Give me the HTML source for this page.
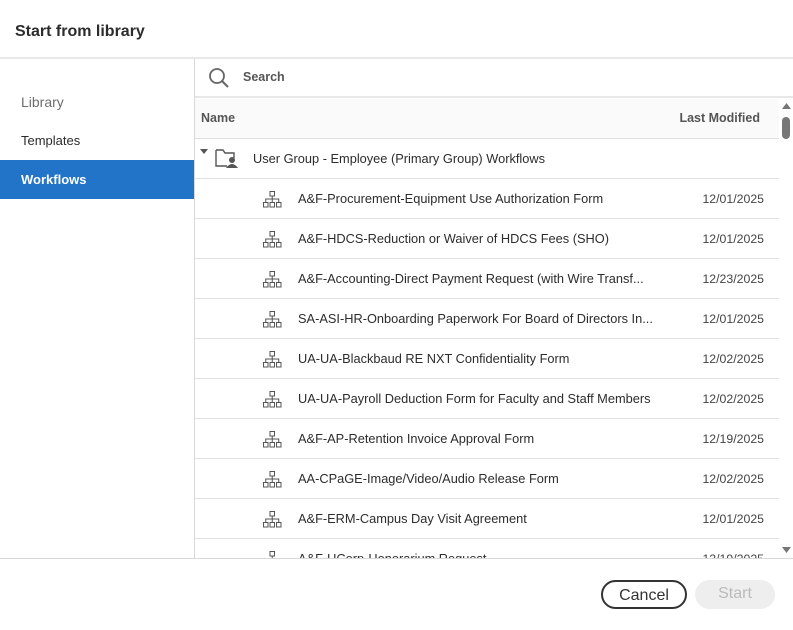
<!DOCTYPE html>
<html><head><style>
*{margin:0;padding:0;box-sizing:border-box}
body{width:793px;height:630px;background:#fff;font-family:"Liberation Sans",sans-serif;color:#2c2c2c;position:relative;overflow:hidden}
.title{position:absolute;left:15px;top:23px;font-size:16px;font-weight:bold;color:#2c2c2c}
.hdiv{position:absolute;left:0;top:57px;width:793px;height:2px;background:#e8e8e8}
.side{position:absolute;left:0;top:59px;width:195px;height:499px;border-right:1px solid #d8d8d8}
.side .it{position:absolute;left:21px;font-size:13px}
.side .sel{position:absolute;left:0;top:101px;width:194px;height:39px;background:#2274c8}
.search{position:absolute;left:195px;top:59px;width:598px;height:39px;border-bottom:2px solid #e8e8e8}
.search span{position:absolute;left:48px;top:11px;font-size:12.5px;font-weight:bold;color:#555}
.head{position:absolute;left:195px;top:99px;width:584px;height:40px;background:#fafafa;border-bottom:1px solid #e0e0e0;font-size:12.5px;font-weight:bold;color:#555}
.row{position:absolute;left:195px;width:584px;height:40px;border-bottom:1px solid #e3e3e3;font-size:12.8px;color:#2c2c2c}
.row .t{position:absolute;left:103px;top:12px;white-space:nowrap}
.row .d{position:absolute;right:15px;top:13px;color:#444;font-size:12.3px}
.row svg{position:absolute;left:67px;top:11px}
.foot{position:absolute;left:0;top:558px;width:793px;height:1px;background:#d8d8d8}
.btn{position:absolute;top:580px;height:29px;border-radius:15px;font-size:16px;text-align:center;line-height:27px}
.sb{position:absolute;left:779px;top:99px;width:14px;height:459px;background:#fff}
</style></head><body>
<div class="title">Start from library</div>
<div class="hdiv"></div>
<div class="side">
<div class="it" style="top:35px;color:#6e6e6e;font-size:14px">Library</div>
<div class="it" style="top:74px">Templates</div>
<div class="sel"></div>
<div class="it" style="top:113px;color:#fff;font-weight:bold">Workflows</div>
</div>
<div class="search">
<svg style="position:absolute;left:13px;top:8px" width="22" height="22" viewBox="0 0 22 22"><circle cx="9" cy="9" r="7" fill="none" stroke="#666" stroke-width="1.8"/><line x1="14" y1="14" x2="20" y2="20" stroke="#666" stroke-width="2"/></svg>
<span>Search</span></div>
<div class="head"><span style="position:absolute;left:6px;top:12px">Name</span><span style="position:absolute;right:19px;top:12px">Last Modified</span></div>
<div class="row" style="top:139px">
<svg style="left:5px;top:10px" width="8" height="6" viewBox="0 0 8 6"><path d="M0 0H8L4 5Z" fill="#555"/></svg>
<svg style="left:20px;top:8px" width="26" height="22" viewBox="0 0 26 22"><path d="M1 3H8L10 6H19V11M1 3V19H12" fill="none" stroke="#555" stroke-width="1.4"/><circle cx="17" cy="13" r="3" fill="#555"/><path d="M11 21Q17 13 23 21Z" fill="#555"/></svg>
<span class="t" style="left:58px">User Group - Employee (Primary Group) Workflows</span></div>
<div id="rows"></div>
<script>
var d=[["A&F-Procurement-Equipment Use Authorization Form","12/01/2025"],["A&F-HDCS-Reduction or Waiver of HDCS Fees (SHO)","12/01/2025"],["A&F-Accounting-Direct Payment Request (with Wire Transf...","12/23/2025"],["SA-ASI-HR-Onboarding Paperwork For Board of Directors In...","12/01/2025"],["UA-UA-Blackbaud RE NXT Confidentiality Form","12/02/2025"],["UA-UA-Payroll Deduction Form for Faculty and Staff Members","12/02/2025"],["A&F-AP-Retention Invoice Approval Form","12/19/2025"],["AA-CPaGE-Image/Video/Audio Release Form","12/02/2025"],["A&F-ERM-Campus Day Visit Agreement","12/01/2025"],["A&F-UCorp-Honorarium Request","12/19/2025"]];
var ic='<svg width="21" height="19" viewBox="0 0 21 19"><g fill="none" stroke="#555" stroke-width="1"><rect x="8" y="1.5" width="4.5" height="4.5"/><rect x="1.5" y="12.5" width="4.5" height="4.5"/><rect x="8" y="12.5" width="4.5" height="4.5"/><rect x="14.5" y="12.5" width="4.5" height="4.5"/><path d="M10.25 6V12.5M3.75 12.5V9H16.75V12.5"/></g></svg>';
var h='';d.forEach(function(r,i){h+='<div class="row" style="top:'+(179+40*i)+'px">'+ic+'<span class="t">'+r[0].replace(/&/g,'&amp;')+'</span><span class="d">'+r[1]+'</span></div>';});
document.getElementById('rows').innerHTML=h;
</script>
<div class="sb">
<svg style="position:absolute;left:3px;top:4px" width="9" height="7"><path d="M0 6H9L4.5 0Z" fill="#777"/></svg>
<div style="position:absolute;left:3px;top:18px;width:8px;height:22px;border-radius:4px;background:#777"></div>
<svg style="position:absolute;left:3px;top:448px" width="9" height="7"><path d="M0 0H9L4.5 6Z" fill="#777"/></svg>
</div>
<div style="position:absolute;left:0;top:559px;width:793px;height:71px;background:#fff"></div>
<div class="foot"></div>
<div class="btn" style="left:601px;width:86px;border:2px solid #333;color:#333">Cancel</div>
<div class="btn" style="left:695px;width:80px;background:#eee;color:#bbb">Start</div>
</body></html>
